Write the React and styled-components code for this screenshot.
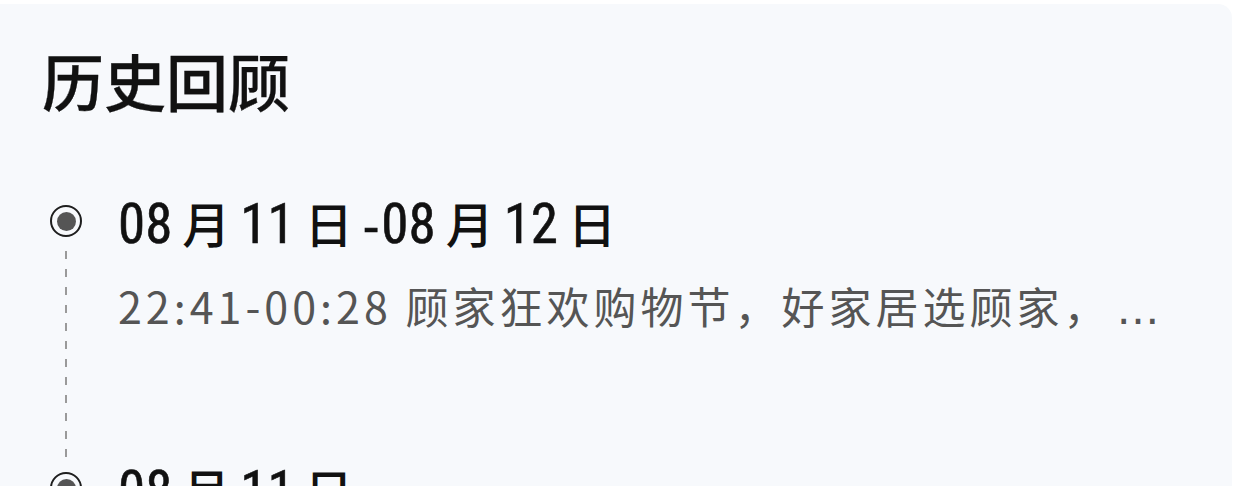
import styled, { createGlobalStyle } from "styled-components";

const Global = createGlobalStyle`
  html, body {
    margin: 0;
    padding: 0;
    background: #ffffff;
    overflow: hidden;
  }
  body {
    font-family: "Noto Sans CJK SC", sans-serif;
  }
`;

const items = [
  {
    date: [["08", "月"], ["11", "日"], "-", ["08", "月"], ["12", "日"]],
    desc: "22:41-00:28 顾家狂欢购物节，好家居选顾家，",
  },
  {
    date: [["08", "月"], ["11", "日"]],
    desc: "20:00-22:30 顾家狂欢购物节，好家居选顾家，",
  },
];

function DateText({ parts }) {
  return (
    <Date>
      {parts.map((p, i) =>
        typeof p === "string" ? (
          <Sep key={i}>{p}</Sep>
        ) : (
          <span key={i}>
            {p[0]}
            <Unit>{p[1]}</Unit>
          </span>
        )
      )}
    </Date>
  );
}

export default function App() {
  return (
    <>
      <Global />
      <Card>
        <Title>历史回顾</Title>
        <Timeline>
          {items.map((it, i) => (
            <Item key={i}>
              <Rail>
                <Dot />
                {i < items.length - 1 && <Dash />}
              </Rail>
              <Body>
                <DateText parts={it.date} />
                <Desc>
                  {it.desc}
                  <More>…</More>
                </Desc>
              </Body>
            </Item>
          ))}
        </Timeline>
      </Card>
    </>
  );
}

const Card = styled.div`
  margin: 4px 4px 0 -20px;
  height: 600px;
  background: #f7f9fc;
  border-top-right-radius: 14px;
  padding: 36px 0 0 62px;
  box-sizing: border-box;
`;

const Title = styled.h1`
  margin: 0;
  font-family: "Noto Sans CJK SC", sans-serif;
  font-size: 62px;
  font-weight: 500;
  color: #111;
  line-height: 80px;
  -webkit-text-stroke: 0.3px #111;
`;

const Timeline = styled.div`
  margin-top: 70px;
  padding-left: 8px;
  display: flex;
  flex-direction: column;
`;

const Item = styled.div`
  display: flex;
  gap: 36px;
  min-height: 267px;
`;

const Rail = styled.div`
  width: 32px;
  display: flex;
  flex-direction: column;
  align-items: center;
  padding-top: 15px;
`;

const Dot = styled.div`
  width: 32px;
  height: 32px;
  box-sizing: border-box;
  border-radius: 50%;
  border: 2.5px solid #1e1e1e;
  display: flex;
  align-items: center;
  justify-content: center;
  flex-shrink: 0;

  &::after {
    content: "";
    width: 19px;
    height: 19px;
    border-radius: 50%;
    background: #555;
  }
`;

const Dash = styled.div`
  flex: 1;
  width: 1.5px;
  margin-top: 14px;
  background: repeating-linear-gradient(
    to bottom,
    #9a9a9a 0 8px,
    transparent 8px 18px
  );
`;

const Body = styled.div`
  display: flex;
  flex-direction: column;
`;

const Date = styled.div`
  font-family: "Liberation Sans Narrow", "Roboto Condensed", "Liberation Sans", sans-serif;
  font-size: 55px;
  color: #111;
  line-height: 64px;
  white-space: nowrap;
  -webkit-text-stroke: 0.6px #111;
`;

const Unit = styled.span`
  font-family: "Noto Sans CJK SC", sans-serif;
  font-size: 48px;
  font-weight: 500;
  margin: 0 10px;
  -webkit-text-stroke: 0;
`;

const Sep = styled.span`
  font-family: "Liberation Sans", sans-serif;
  font-size: 50px;
  margin: 0 2px 0 0;
`;

const Desc = styled.div`
  margin-top: 22px;
  font-family: "Noto Sans CJK SC", sans-serif;
  font-size: 43px;
  color: #555;
  line-height: 50px;
  letter-spacing: 4px;
  white-space: nowrap;
`;

const More = styled.span`
  font-family: "DejaVu Sans", sans-serif;
  margin-left: 6px;
  letter-spacing: 0;
`;
